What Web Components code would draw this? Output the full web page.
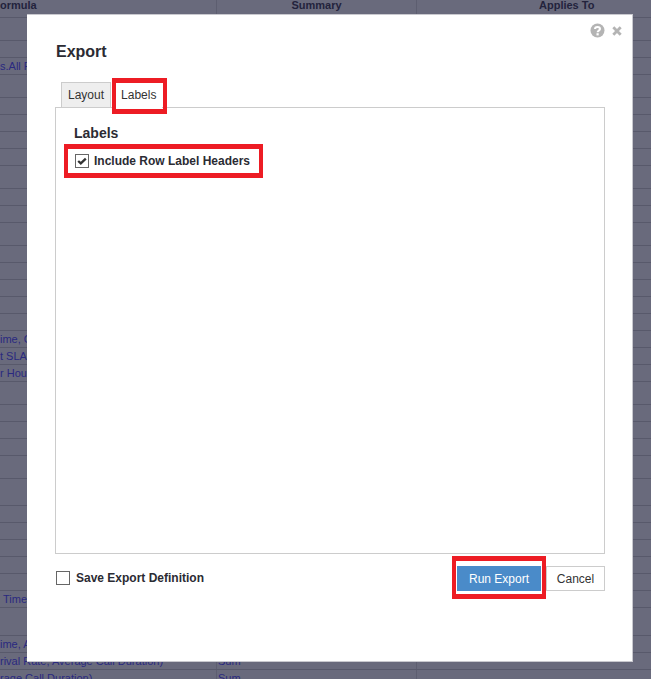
<!DOCTYPE html>
<html>
<head>
<meta charset="utf-8">
<title>Export</title>
<style>
  html, body { margin: 0; height: 100%; overflow: hidden; background: #696a7c; }
  body { font-family: "Liberation Sans", Arial, sans-serif; font-size: 12px; position: relative; }
</style>
</head>
<body>
<bg-table></bg-table>

<export-dialog heading="Export">
  <dialog-tab slot="tabs" label="Layout"></dialog-tab>
  <red-callout slot="tabs" style="--top:-4px;--right:-5px;--bottom:-7px;--left:-3px;margin-left:4px">
    <dialog-tab label="Labels" active></dialog-tab>
  </red-callout>

  <section-title>Labels</section-title>
  <red-callout style="--top:-10px;--right:-13px;--bottom:-10px;--left:-11px;margin:12px 0 0 19px;display:block;width:max-content">
    <check-field checked style="gap:5px">Include Row Label Headers</check-field>
  </red-callout>

  <check-field slot="footer-left">Save Export Definition</check-field>
  <red-callout slot="footer-right" style="--top:-10px;--right:-5px;--bottom:-8px;--left:-5px;margin-right:5px">
    <app-button primary>Run Export</app-button>
  </red-callout>
  <app-button slot="footer-right">Cancel</app-button>
</export-dialog>

<script>
// Fila de la tabla que queda detras del dialogo
class BgRow extends HTMLElement {
    constructor() {
        super();
        this.attachShadow({ mode: 'open' });
        const alto = this.getAttribute('h');
        const x = this.getAttribute('x') || 0;
        const head = this.hasAttribute('head');
        this.shadowRoot.innerHTML = `
            <style>
                :host {
                    display: grid;
                    grid-template-columns: 217px 200px 1fr;
                    box-sizing: border-box;
                    height: ${alto}px;
                    border-bottom: 1px solid #58596b;
                    color: ${head ? '#23233c' : '#2a2980'};
                    font: ${head ? 'bold ' : ''}11px/${head ? 11 : 17}px "Liberation Sans", Arial, sans-serif;
                    white-space: nowrap;
                }
                div { border-right: 1px solid #5d5e70; overflow: hidden; }
                .a { padding-left: ${x}px; }
                .b { padding-left: 1px; }
                :host([head]) .b { text-align: center; padding: 0; }
                :host([head]) .c { padding-left: 122px; }
                .c { border: 0; }
            </style>
            <div class="a"><slot></slot></div>
            <div class="b">${this.getAttribute('summary') || ''}</div>
            <div class="c">${this.getAttribute('applies') || ''}</div>
        `;
    }
}
customElements.define('bg-row', BgRow);

class BgTable extends HTMLElement {
    constructor() {
        super();
        this.attachShadow({ mode: 'open' });
        this.shadowRoot.innerHTML = `
            <style>
                :host { display: block; height: 679px; overflow: hidden; }
            </style>
            <slot></slot>
        `;
        // altos de cada fila, sacados de las lineas de la captura
        const altos = [23,17,17,23,17,17,17,17,23,17,17,23,17,17,17,17,17,17,17,17,23,17,17,17,23,27,17,17,17,17,17,17,28,17,17,17,17];
        const textos = {
            2: ['s.All R', 0], 17: ['ime, C', 0], 18: ['t SLA', 0], 19: ['r Hour', 0],
            31: ['Time', 3], 33: ['ime, A', 0], 34: ['rival Rate, Average Call Duration)', 0, 'Sum'],
            35: ['rage Call Duration)', 0, 'Sum']
        };
        let html = '<bg-row head h="18" summary="Summary" applies="Applies To">ormula</bg-row>';
        altos.forEach((h, i) => {
            const t = textos[i] || ['', 0];
            html += `<bg-row h="${h}" x="${t[1]}" summary="${t[2] || ''}">${t[0]}</bg-row>`;
        });
        this.innerHTML = html;
    }
}
customElements.define('bg-table', BgTable);

// Recuadro rojo de la anotacion, encima del contenido
class RedCallout extends HTMLElement {
    constructor() {
        super();
        this.attachShadow({ mode: 'open' });
        this.shadowRoot.innerHTML = `
            <style>
                :host { display: inline-block; position: relative; vertical-align: top; }
                .marco {
                    position: absolute;
                    top: var(--top); right: var(--right); bottom: var(--bottom); left: var(--left);
                    border: 5px solid #ed1c24;
                    border-width: 5px 4px;
                    pointer-events: none;
                }
            </style>
            <slot></slot>
            <div class="marco"></div>
        `;
    }
}
customElements.define('red-callout', RedCallout);

class DialogTab extends HTMLElement {
    constructor() {
        super();
        this.attachShadow({ mode: 'open' });
        this.shadowRoot.innerHTML = `
            <style>
                :host {
                    display: block;
                    box-sizing: border-box;
                    height: 25px;
                    padding: 0 6px;
                    background: #eeeeee;
                    border: 1px solid #cccccc;
                    border-bottom: 0;
                    color: #333333;
                    font: 12px/24px "Liberation Sans", Arial, sans-serif;
                }
                :host([active]) {
                    height: 26px;
                    margin-bottom: -1px;
                    padding: 0 5px;
                    background: #ffffff;
                    border-color: #ffffff;
                    position: relative;
                }
            </style>
            ${this.getAttribute('label')}
        `;
    }
}
customElements.define('dialog-tab', DialogTab);

class SectionTitle extends HTMLElement {
    constructor() {
        super();
        this.attachShadow({ mode: 'open' });
        this.shadowRoot.innerHTML = `
            <style>
                :host {
                    display: block;
                    margin: 17px 0 0 18px;
                    color: #2b2b33;
                    font: bold 14px/17px "Liberation Sans", Arial, sans-serif;
                }
            </style>
            <slot></slot>
        `;
    }
}
customElements.define('section-title', SectionTitle);

class CheckField extends HTMLElement {
    constructor() {
        super();
        this.attachShadow({ mode: 'open' });
        const marca = this.hasAttribute('checked')
            ? '<svg width="12" height="12" viewBox="0 0 12 12"><path d="M2.2 6 L4.8 8.4 L9.8 3.6" fill="none" stroke="#333" stroke-width="2.3"/></svg>'
            : '';
        this.shadowRoot.innerHTML = `
            <style>
                :host {
                    display: flex;
                    align-items: center;
                    gap: 6px;
                    color: #2b2b33;
                    font: bold 12px/14px "Liberation Sans", Arial, sans-serif;
                    white-space: nowrap;
                }
                .caja {
                    box-sizing: border-box;
                    width: 14px;
                    height: 14px;
                    border: 1px solid #666;
                    background: #fff;
                    display: flex;
                    align-items: center;
                    justify-content: center;
                }
            </style>
            <span class="caja">${marca}</span>
            <span><slot></slot></span>
        `;
    }
}
customElements.define('check-field', CheckField);

class AppButton extends HTMLElement {
    constructor() {
        super();
        this.attachShadow({ mode: 'open' });
        this.shadowRoot.innerHTML = `
            <style>
                :host {
                    display: block;
                    box-sizing: border-box;
                    height: 25px;
                    width: 59px;
                    text-align: center;
                    background: #fff;
                    border: 1px solid #cccccc;
                    color: #333;
                    font: 12px/24px "Liberation Sans", Arial, sans-serif;
                    cursor: pointer;
                }
                :host([primary]) {
                    width: 84px;
                    background: #4a8bc9;
                    border-color: #4a8bc9;
                    color: #fff;
                }
            </style>
            <slot></slot>
        `;
    }
}
customElements.define('app-button', AppButton);

class ExportDialog extends HTMLElement {
    constructor() {
        super();
        this.attachShadow({ mode: 'open' });
        this.shadowRoot.innerHTML = `
            <style>
                :host {
                    position: absolute;
                    top: 14px;
                    left: 27px;
                    width: 606px;
                    height: 648px;
                    box-sizing: border-box;
                    background: #fff;
                    border: 1px solid #c9c9cf;
                    border-left: 0;
                    padding: 27px 27px 70px 28px;
                    display: flex;
                    flex-direction: column;
                }
                .iconos {
                    position: absolute;
                    top: 8px;
                    right: 10px;
                    display: flex;
                    align-items: center;
                    gap: 7px;
                }
                h1 {
                    margin: 0 0 0 1px;
                    color: #2b2b33;
                    font: bold 16px/20px "Liberation Sans", Arial, sans-serif;
                }
                .tabs { display: flex; margin: 20px 0 0 6px; align-items: flex-end; position: relative; z-index: 1; }
                .panel {
                    flex: 1;
                    border: 1px solid #cccccc;
                }
                .pie {
                    display: flex;
                    justify-content: space-between;
                    margin-top: 12px;
                }
                .izq { display: flex; align-items: center; padding: 0 0 1px 1px; height: 24px; }
                .der { display: flex; }
            </style>
            <div class="iconos">
                <svg width="15" height="15" viewBox="0 0 15 15">
                    <circle cx="7.5" cy="7.5" r="7" fill="#b4b4b4"/>
                    <path d="M5 6 C5 3.3 10 3.3 10 6 C10 7.6 7.6 7.6 7.6 9.2" fill="none" stroke="#fff" stroke-width="2"/>
                    <rect x="6.5" y="10.2" width="2.2" height="2.2" fill="#fff"/>
                </svg>
                <svg width="10" height="10" viewBox="0 0 10 10">
                    <path d="M1.3 1.3 L8.7 8.7 M8.7 1.3 L1.3 8.7" stroke="#b4b4b4" stroke-width="2.8"/>
                </svg>
            </div>
            <h1>${this.getAttribute('heading')}</h1>
            <div class="tabs"><slot name="tabs"></slot></div>
            <div class="panel"><slot></slot></div>
            <div class="pie">
                <div class="izq"><slot name="footer-left"></slot></div>
                <div class="der"><slot name="footer-right"></slot></div>
            </div>
        `;
    }
}
customElements.define('export-dialog', ExportDialog);
</script>
</body>
</html>
